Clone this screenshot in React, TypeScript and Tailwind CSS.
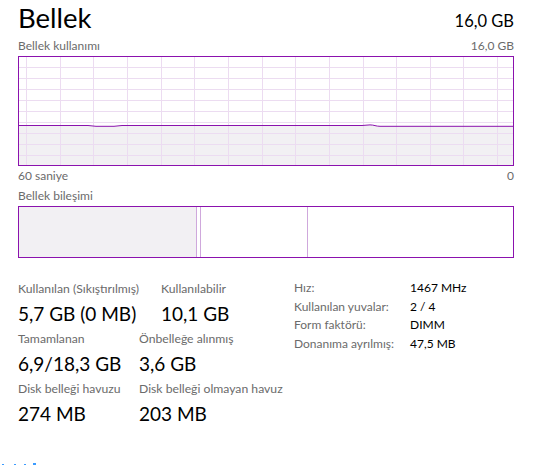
import React from "react";

const PURPLE = "#8b12ae";

function UsageGraph() {
  const w = 496;
  const h = 110;
  const vx = Array.from({ length: 15 }, (_, i) => 8.5 + Math.round(i * 33.65));
  const hy = Array.from({ length: 9 }, (_, i) => 11.5 + Math.round(i * 10.95));
  const line =
    "M0 69.5 L70 69.5 C73 69.5 75 70.3 78 70.3 L96 70.3 C99 70.3 101 69.5 104 69.5 L344 69.5 C347 69.5 349 68.9 352 68.9 C356 68.9 358 70.3 362 70.3 L496 70.3";
  return (
    <svg width={w} height={h} viewBox={`0 0 ${w} ${h}`} className="block">
      <rect x="0" y="0" width={w} height={h} fill="#ffffff" />
      <path d={`${line} L496 110 L0 110 Z`} fill="#f2f0f3" />
      {vx.map((x) => (
        <line key={"v" + x} x1={x} y1={0} x2={x} y2={h} stroke="#ecdcf1" strokeWidth="1" />
      ))}
      {hy.map((y) => (
        <line key={"h" + y} x1={0} y1={y} x2={w} y2={y} stroke="#ecdcf1" strokeWidth="1" />
      ))}
      <path d={line} fill="none" stroke={PURPLE} strokeWidth="1" />
      <rect x="0.5" y="0.5" width={w - 1} height={h - 1} fill="none" stroke={PURPLE} strokeWidth="1" />
    </svg>
  );
}

function Composition() {
  return (
    <svg width={496} height={52} viewBox="0 0 496 52" className="block">
      <rect x="0" y="0" width="496" height="52" fill="#ffffff" />
      <rect x="0" y="0" width="178.5" height="52" fill="#f2f0f3" />
      <line x1="178.5" y1="0" x2="178.5" y2="52" stroke="#cfa8dc" strokeWidth="1" />
      <line x1="182.5" y1="0" x2="182.5" y2="52" stroke="#cfa8dc" strokeWidth="1" />
      <line x1="289.5" y1="0" x2="289.5" y2="52" stroke="#cfa8dc" strokeWidth="1" />
      <rect x="0.5" y="0.5" width="495" height="51" fill="none" stroke={PURPLE} strokeWidth="1" />
    </svg>
  );
}

function Stat({ label, value, className }: { label: string; value: string; className?: string }) {
  return (
    <div className={className}>
      <div className="text-[12.2px] leading-[16px] text-[#6b6b6b] whitespace-nowrap">{label}</div>
      <div className="mt-[5px] text-[19px] leading-[24px] text-black whitespace-nowrap">{value}</div>
    </div>
  );
}

export default function App() {
  const font = { fontFamily: 'Lato, "Noto Sans", sans-serif' };
  return (
    <div className="w-[538px] h-[466px] bg-white overflow-hidden flex flex-col" style={font}>
      <div className="px-[18px] flex flex-col w-[532px]">
        <div className="flex justify-between items-end h-[34px]">
          <div className="text-[27.5px] leading-[33px] text-black">Bellek</div>
          <div className="text-[16.5px] leading-[26px] text-black">16,0 GB</div>
        </div>
        <div className="flex justify-between h-[21px] items-center mt-[1px] text-[12px] text-[#6b6b6b]">
          <span>Bellek kullanımı</span>
          <span>16,0 GB</span>
        </div>
        <UsageGraph />
        <div className="flex justify-between h-[19px] items-center text-[12px] text-[#6b6b6b]">
          <span>60 saniye</span>
          <span>0</span>
        </div>
        <div className="flex h-[21px] items-center text-[12px] text-[#6b6b6b]">
          <span>Bellek bileşimi</span>
        </div>
        <Composition />
      </div>
      <div className="flex px-[18px] mt-[23px]">
        <div className="flex flex-col w-[276px]">
          <div className="flex">
            <Stat className="w-[143px]" label="Kullanılan (Sıkıştırılmış)" value="5,7 GB (0 MB)" />
            <Stat label="Kullanılabilir" value="10,1 GB" />
          </div>
          <div className="flex mt-[5px]">
            <Stat className="w-[121px]" label="Tamamlanan" value="6,9/18,3 GB" />
            <Stat label="Önbelleğe alınmış" value="3,6 GB" />
          </div>
          <div className="flex mt-[5px]">
            <Stat className="w-[121px]" label="Disk belleği havuzu" value="274 MB" />
            <Stat label="Disk belleği olmayan havuz" value="203 MB" />
          </div>
        </div>
        <div className="flex flex-col mt-[-2px] text-[12px] leading-[18.5px]">
          {[
            ["Hız:", "1467 MHz"],
            ["Kullanılan yuvalar:", "2 / 4"],
            ["Form faktörü:", "DIMM"],
            ["Donanıma ayrılmış:", "47,5 MB"],
          ].map(([k, v]) => (
            <div key={k} className="flex">
              <span className="w-[116px] text-[#6b6b6b] whitespace-nowrap">{k}</span>
              <span className="text-black whitespace-nowrap">{v}</span>
            </div>
          ))}
        </div>
      </div>
      <div className="flex-1" />
      <div className="flex items-end gap-[6px] pl-[2px] h-[4px] mb-[1px]">
        <span className="w-[2px] h-[1px] bg-[#3b9bff]" />
        <span className="w-[2px] h-[1px] bg-[#3b9bff] ml-[4px]" />
        <span className="w-[2px] h-[1px] bg-[#3b9bff] ml-[2px]" />
        <span className="w-[3px] h-[2px] bg-[#3b9bff] ml-[1px]" />
      </div>
    </div>
  );
}
